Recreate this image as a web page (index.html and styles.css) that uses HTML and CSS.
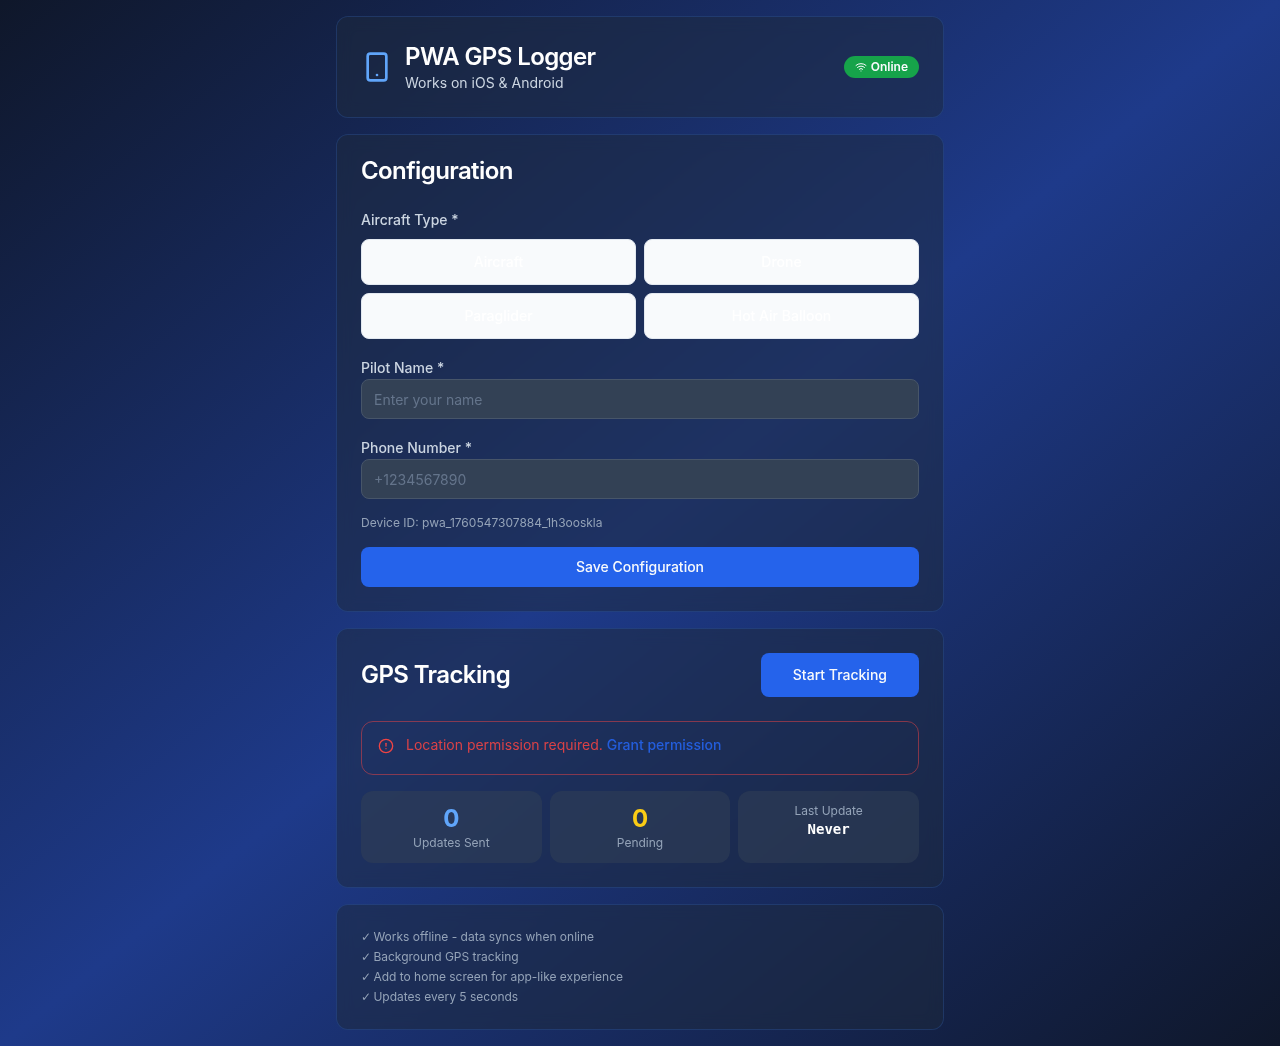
FILE: index.html
```html
<!DOCTYPE html>
<html lang="en">
<head>
<meta charset="utf-8">
<title>PWA GPS Logger</title>
<link rel="stylesheet" href="styles.css">
</head>
<body>
<main class="page">
  <header class="card header">
    <div class="brand">
      <svg class="brand-icon" viewBox="0 0 24 24" fill="none" stroke="currentColor" stroke-width="2" stroke-linecap="round" stroke-linejoin="round"><rect width="14" height="20" x="5" y="2" rx="2"/><path d="M12 18h.01"/></svg>
      <div>
        <h1 class="title">PWA GPS Logger</h1>
        <p class="subtitle">Works on iOS &amp; Android</p>
      </div>
    </div>
    <span class="badge">
      <svg class="badge-icon" viewBox="0 0 24 24" fill="none" stroke="currentColor" stroke-width="2" stroke-linecap="round" stroke-linejoin="round"><path d="M12 20h.01"/><path d="M2 8.82a15 15 0 0 1 20 0"/><path d="M5 12.859a10 10 0 0 1 14 0"/><path d="M8.5 16.429a5 5 0 0 1 7 0"/></svg>
      Online
    </span>
  </header>

  <section class="card config">
    <h2 class="heading">Configuration</h2>
    <div class="fields">
      <div>
        <div class="label">Aircraft Type *</div>
        <div class="types">
          <button class="type">Aircraft</button>
          <button class="type">Drone</button>
          <button class="type">Paraglider</button>
          <button class="type">Hot Air Balloon</button>
        </div>
      </div>
      <div>
        <label class="label" for="pilot">Pilot Name *</label>
        <input class="input" id="pilot" placeholder="Enter your name">
      </div>
      <div>
        <label class="label" for="phone">Phone Number *</label>
        <input class="input" id="phone" type="tel" placeholder="+1234567890">
      </div>
      <p class="small">Device ID: pwa_1760547307884_1h3ooskla</p>
      <button class="primary">Save Configuration</button>
    </div>
  </section>

  <section class="card tracking">
    <div class="tracking-head">
      <h2 class="heading">GPS Tracking</h2>
      <button class="primary start">Start Tracking</button>
    </div>
    <div class="alert">
      <svg class="alert-icon" viewBox="0 0 24 24" fill="none" stroke="currentColor" stroke-width="2" stroke-linecap="round" stroke-linejoin="round"><circle cx="12" cy="12" r="10"/><path d="M12 8v4"/><path d="M12 16h.01"/></svg>
      <p class="alert-text">Location permission required. <a class="grant">Grant permission</a></p>
    </div>
    <div class="stats">
      <div class="stat"><div class="number sent">0</div><div class="small">Updates Sent</div></div>
      <div class="stat"><div class="number pending">0</div><div class="small">Pending</div></div>
      <div class="stat"><div class="small">Last Update</div><div class="never">Never</div></div>
    </div>
  </section>

  <section class="card notes">
    <p class="small"><span class="check">✓</span> Works offline - data syncs when online</p>
    <p class="small"><span class="check">✓</span> Background GPS tracking</p>
    <p class="small"><span class="check">✓</span> Add to home screen for app-like experience</p>
    <p class="small"><span class="check">✓</span> Updates every 5 seconds</p>
  </section>
</main>
</body>
</html>
```
FILE: styles.css
```css
* { box-sizing: border-box; margin: 0; padding: 0; }
body {
  min-height: 100vh;
  font: 400 16px/24px Inter, "Noto Sans", sans-serif;
  color: #f8fafc;
  background: linear-gradient(to bottom right, #0f172a, #1e3a8a, #0f172a);
}
button, input { font: inherit; }
.page {
  width: 640px;
  margin: 0 auto;
  padding: 16px;
  display: flex;
  flex-direction: column;
  gap: 16px;
}
.card {
  padding: 24px;
  border: 1px solid rgba(59, 130, 246, .2);
  border-radius: 12px;
  background: rgba(30, 41, 59, .5);
  backdrop-filter: blur(8px);
}
.header, .brand, .tracking-head { display: flex; align-items: center; }
.header, .tracking-head { justify-content: space-between; }
.brand { gap: 12px; }
.brand-icon { width: 32px; height: 32px; color: #60a5fa; }
.title { font-size: 24px; line-height: 32px; font-weight: 600; letter-spacing: -.6px; color: #fff; }
.subtitle { font-size: 14px; line-height: 20px; color: #cbd5e1; }
.badge {
  display: flex;
  align-items: center;
  gap: 4px;
  padding: 3px 11px;
  border-radius: 999px;
  background: #16a34a;
  font-size: 12px;
  line-height: 16px;
  font-weight: 600;
}
.badge-icon { width: 12px; height: 12px; }
.heading { font-size: 24px; line-height: 24px; font-weight: 600; letter-spacing: -.6px; color: #fff; }
.config, .fields { display: flex; flex-direction: column; }
.config { gap: 24px; }
.fields { gap: 16px; }
.label { display: block; height: 24px; font-size: 14px; line-height: 26px; font-weight: 500; color: #cbd5e1; }
.types { display: grid; grid-template-columns: 1fr 1fr; gap: 8px; margin-top: 8px; }
.type {
  height: 46px;
  border: 1px solid #e2e8f0;
  border-radius: 8px;
  background: #f8fafc;
  color: #fff;
  font-size: 14px;
  font-weight: 500;
}
.input {
  display: block;
  width: 100%;
  height: 40px;
  padding: 8px 12px;
  border: 1px solid #475569;
  border-radius: 8px;
  background: #334155;
  font-size: 14px;
  color: #fff;
}
.input::placeholder { color: #64748b; }
.small { font-size: 12px; line-height: 16px; color: #94a3b8; }
.primary {
  height: 40px;
  border: 0;
  border-radius: 8px;
  background: #2563eb;
  color: #f8fafc;
  font-size: 14px;
  font-weight: 500;
}
.start { height: 44px; padding: 0 32px; }
.tracking { display: flex; flex-direction: column; }
.alert {
  display: flex;
  gap: 12px;
  height: 54px;
  margin: 24px 0 16px;
  padding: 16px;
  border: 1px solid rgba(239, 68, 68, .5);
  border-radius: 12px;
  color: #ef4444;
}
.alert-icon { width: 16px; height: 16px; }
.alert-text { margin-top: -3px; font-size: 14px; line-height: 20px; opacity: .9; }
.grant { color: #2563eb; font-weight: 500; }
.stats { display: grid; grid-template-columns: repeat(3, 1fr); gap: 8px; }
.stat { height: 72px; padding: 12px; border-radius: 12px; background: rgba(51, 65, 85, .5); text-align: center; }
.number { font-size: 24px; line-height: 32px; font-weight: 700; }
.sent { color: #60a5fa; }
.pending { color: #facc15; }
.never { font: 700 14px/20px "DejaVu Sans Mono", monospace; color: #fff; }
.notes { display: flex; flex-direction: column; gap: 4px; }
.check { display: inline-block; width: 9px; font-family: "DejaVu Sans", sans-serif; line-height: 14px; }
```
